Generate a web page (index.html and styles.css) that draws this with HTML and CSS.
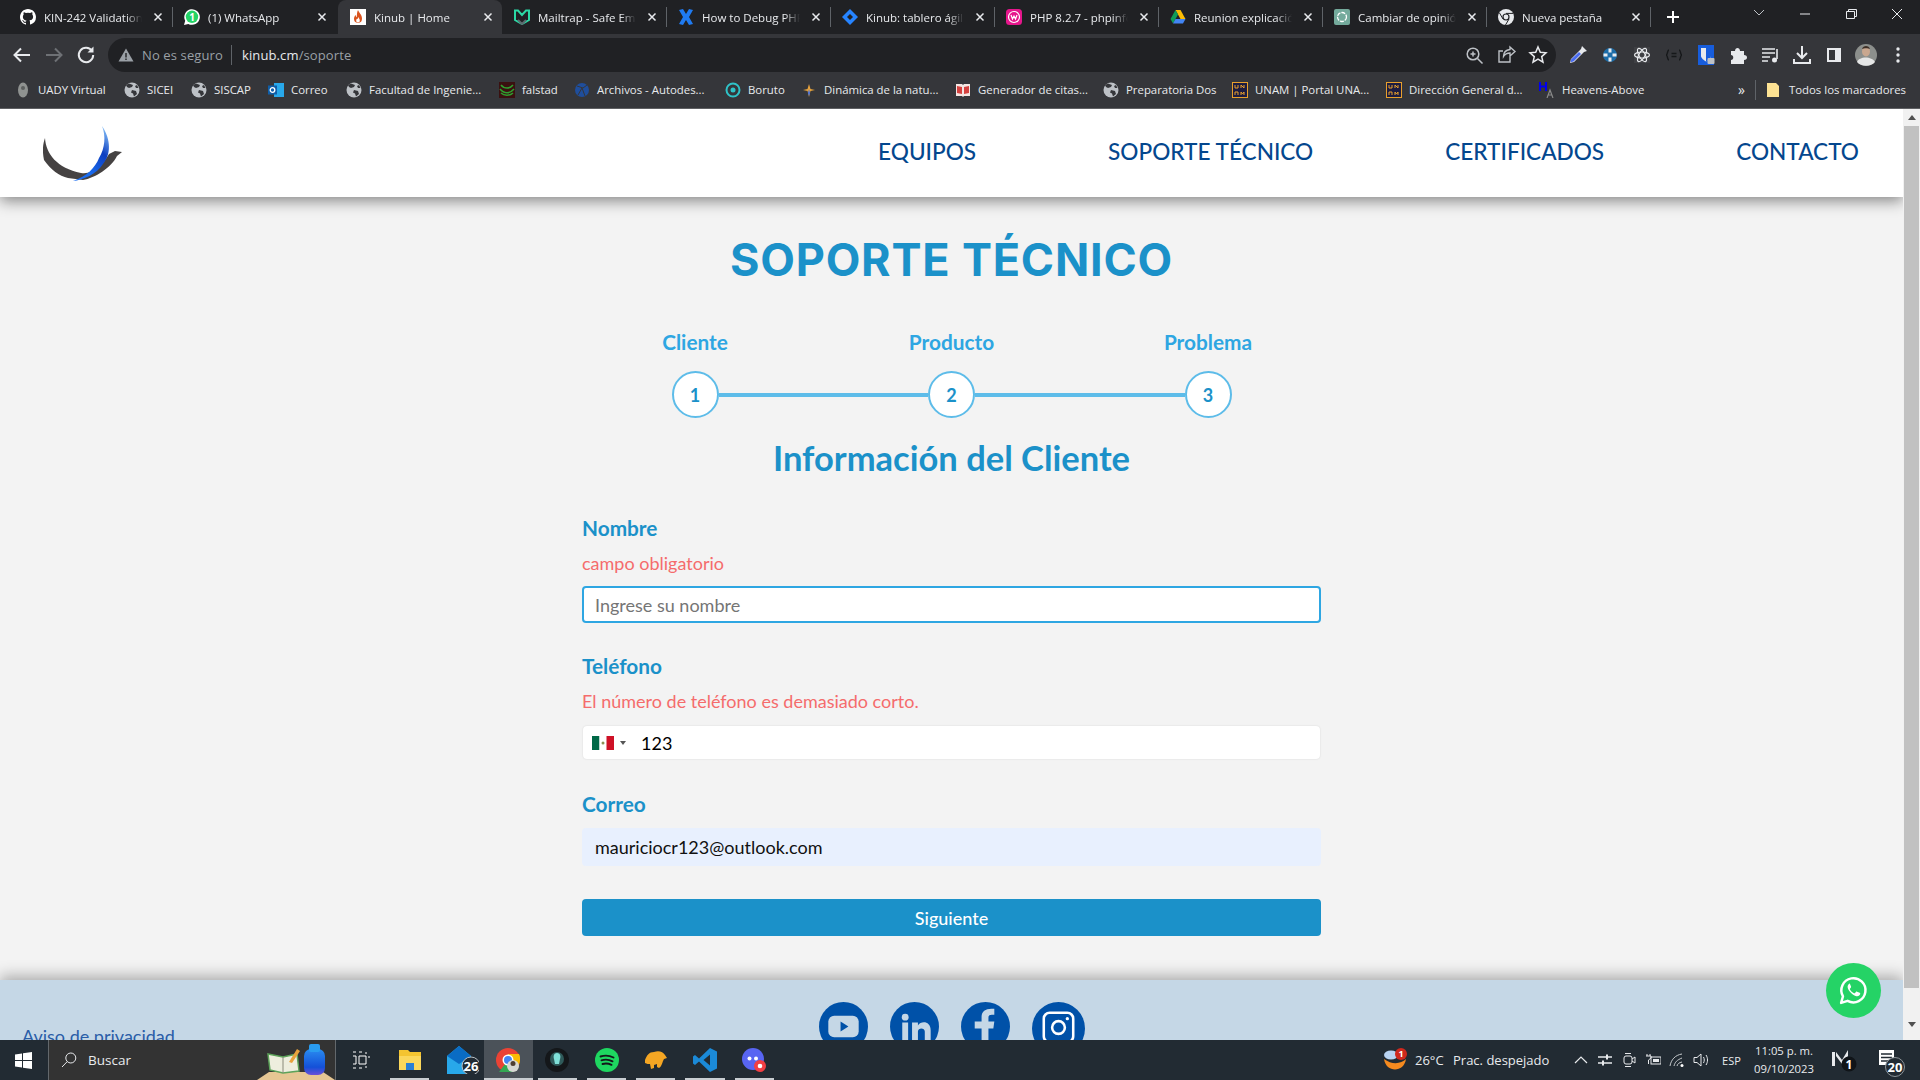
FILE: index.html
```html
<!DOCTYPE html>
<html lang="es">
<head>
<meta charset="utf-8">
<title>Kinub | Soporte</title>
<link rel="stylesheet" href="styles.css">
</head>
<body>
<svg class="defs" width="0" height="0">
  <defs>
    <symbol id="globe" viewBox="0 0 16 16"><circle cx="8" cy="8" r="7.5" fill="#bdc1c6"/><path d="M5 1.5 9 3 8 5 5 6 3 5 2 3zM8 8l4 1 1 3-3 2.5-1-3-2-1zM13 3l1.500 3-2.500 0-1-2z" fill="#35363a"/></symbol>
    <symbol id="close" viewBox="0 0 10 10"><path d="M1.500 1.500l7 7m0-7l-7 7" stroke="#e8eaed" stroke-width="1.500" fill="none"/></symbol>
    <symbol id="wa" viewBox="0 0 32 32"><path d="M4 28l1.800-6.400A11.700 11.700 0 1 1 10.300 26z" fill="none" stroke="currentColor" stroke-width="2.400" stroke-linejoin="round"/><path d="M12 9.500c-1 .4-2 2-1.600 3.800.6 3 4.800 7.400 8.400 8.200 1.900.4 3.400-.8 3.700-2 .2-.7-.1-1-.5-1.200l-2.500-1.200c-.5-.2-.8-.1-1 .2l-1 1.200c-.3.300-.6.300-1 .1-1.700-.8-3-2-3.900-3.600-.2-.4-.2-.6.100-.9l.8-1c.2-.3.200-.6.100-.9l-1-2.400c-.2-.5-.6-.6-1-.5z" fill="currentColor"/></symbol>
    <linearGradient id="blueArc" x1="0.800" y1="0" x2="0.200" y2="1"><stop offset="0" stop-color="#7db8f5"/><stop offset=".35" stop-color="#0e3fc0"/><stop offset=".8" stop-color="#1a6df0"/><stop offset="1" stop-color="#1a6df0"/></linearGradient>
    <linearGradient id="bottle" x1="0" y1="0" x2="0" y2="1"><stop offset="0" stop-color="#2a8cf0"/><stop offset=".7" stop-color="#1450d8"/><stop offset="1" stop-color="#6a50d8"/></linearGradient>
  </defs>
</svg>

<div class="tabstrip">
  <div class="tab">
    <svg class="fav" viewBox="0 0 16 16"><path fill="#fff" d="M8 0C3.600 0 0 3.600 0 8c0 3.500 2.300 6.500 5.500 7.600.4.100.5-.2.5-.4v-1.400c-2.200.5-2.700-1-2.700-1-.4-.9-.9-1.200-.9-1.200-.7-.5.100-.5.100-.5.800.1 1.200.8 1.200.8.700 1.200 1.900.9 2.300.7.100-.5.300-.9.500-1.100-1.800-.2-3.600-.9-3.600-4 0-.9.300-1.600.8-2.100-.1-.2-.4-1 .1-2.100 0 0 .7-.2 2.200.8a7.500 7.500 0 0 1 4 0c1.500-1 2.200-.8 2.200-.8.400 1.100.2 1.900.1 2.100.5.600.8 1.300.8 2.100 0 3.100-1.900 3.700-3.700 3.900.3.300.6.800.6 1.500v2.200c0 .2.100.5.600.4A8 8 0 0 0 16 8c0-4.400-3.600-8-8-8z"/></svg>
    <span class="tab-title">KIN-242 Validation</span>
    <svg class="tab-x"><use href="#close"/></svg>
  </div>
  <div class="tab tab-wide">
    <svg class="fav" viewBox="0 0 16 16"><path d="M0 16l1.200-4.200A7.800 7.800 0 1 1 4.300 14.900z" fill="#fff"/><circle cx="8" cy="7.800" r="6.200" fill="#25d366"/><text x="8" y="11.500" class="fav-num">1</text></svg>
    <span class="tab-title">(1) WhatsApp</span>
    <svg class="tab-x"><use href="#close"/></svg>
  </div>
  <div class="tab tab-active">
    <svg class="fav" viewBox="0 0 16 16"><rect width="16" height="16" fill="#fff"/><path d="M8 1c1 3 4 4.500 4 8.500A4.300 4.300 0 0 1 8 14a4.300 4.300 0 0 1-4-4.500c0-1.500 1-3 1.700-3.500 0 1.200.5 2 1 2.200C7 6 6.800 3.500 8 1z" fill="#d9531e"/><path d="M8.200 8c.8 1.500 1.600 2 1.600 3.500A1.800 1.800 0 0 1 8 13.500a1.800 1.800 0 0 1-1.800-2c0-1 .6-1.500 1-2 .2.500.5.500.7.400 0-.6 0-1.200.3-1.900z" fill="#fff"/></svg>
    <span class="tab-title">Kinub | Home</span>
    <svg class="tab-x"><use href="#close"/></svg>
  </div>
  <div class="tab">
    <svg class="fav" viewBox="0 0 16 16"><path d="M1 1.500h3L8 6l4-4.500h3V11l-7 4-7-4z" fill="none" stroke="#2bd9a5" stroke-width="2"/><path d="M4 11l4 4 4-4" fill="none" stroke="#5c6b70" stroke-width="2"/></svg>
    <span class="tab-title">Mailtrap - Safe Email</span>
    <svg class="tab-x"><use href="#close"/></svg>
  </div>
  <div class="tab">
    <svg class="fav" viewBox="0 0 16 16"><path d="M1 1l4-1 3 5 3-5 4 1-4 7 4 7-4 1-3-5-3 5-4-1 4-7z" fill="#1f7bf2"/></svg>
    <span class="tab-title">How to Debug PHP</span>
    <svg class="tab-x"><use href="#close"/></svg>
  </div>
  <div class="tab">
    <svg class="fav" viewBox="0 0 16 16"><path d="M8 0l8 8-8 8-8-8z" fill="#2684ff"/><path d="M8 5l3 3-3 3-3-3z" fill="#202124"/></svg>
    <span class="tab-title">Kinub: tablero ágil</span>
    <svg class="tab-x"><use href="#close"/></svg>
  </div>
  <div class="tab">
    <svg class="fav" viewBox="0 0 16 16"><rect width="16" height="16" rx="3.500" fill="#e6168c"/><circle cx="8" cy="8" r="5.500" fill="none" stroke="#fff" stroke-width="1.200"/><path d="M5 6l1.500 4L8 7l1.500 3L11 6" fill="none" stroke="#fff" stroke-width="1.200"/></svg>
    <span class="tab-title">PHP 8.2.7 - phpinfo()</span>
    <svg class="tab-x"><use href="#close"/></svg>
  </div>
  <div class="tab">
    <svg class="fav" viewBox="0 0 16 16"><path d="M5.500 1h5l5 9h-5z" fill="#fbbc04"/><path d="M5.500 1L.5 10 3 14.500 8 5.500z" fill="#0f9d58"/><path d="M3 14.500h10l2.500-4.500H5.500z" fill="#4285f4"/></svg>
    <span class="tab-title">Reunion explicación</span>
    <svg class="tab-x"><use href="#close"/></svg>
  </div>
  <div class="tab">
    <svg class="fav" viewBox="0 0 16 16"><rect width="16" height="16" rx="2" fill="#74aa9c"/><circle cx="8" cy="8" r="4.500" fill="none" stroke="#fff" stroke-width="1.300" stroke-dasharray="4 1"/></svg>
    <span class="tab-title">Cambiar de opinión</span>
    <svg class="tab-x"><use href="#close"/></svg>
  </div>
  <div class="tab tab-last">
    <svg class="fav" viewBox="0 0 16 16"><circle cx="8" cy="8" r="8" fill="#e8eaed"/><circle cx="8" cy="8" r="3.600" fill="#202124"/><circle cx="8" cy="8" r="2.400" fill="#e8eaed"/><path d="M8 4.400h7M5 10L1.500 4M11 10l-3.500 6" stroke="#202124" stroke-width="1"/></svg>
    <span class="tab-title">Nueva pestaña</span>
    <svg class="tab-x"><use href="#close"/></svg>
  </div>
  <svg class="newtab" viewBox="0 0 12 12"><path d="M6 0v12M0 6h12" stroke="#fff" stroke-width="2"/></svg>
  <div class="winctrls">
    <svg class="winbtn" viewBox="0 0 46 28"><path d="M18 10l5 5 5-5" fill="none" stroke="#bdc1c6"/></svg>
    <svg class="winbtn" viewBox="0 0 46 28"><path d="M18 14h10" stroke="#e8eaed"/></svg>
    <svg class="winbtn" viewBox="0 0 46 28"><path d="M18.500 11.500h8v7h-8zM20.500 11.500v-2h8v7h-2" fill="none" stroke="#e8eaed"/></svg>
    <svg class="winbtn" viewBox="0 0 46 28"><path d="M18 9l10 10m0-10L18 19" stroke="#e8eaed"/></svg>
  </div>
</div>

<div class="toolbar">
  <svg class="tool" viewBox="0 0 32 32"><path d="M24 16H9m6-6.500L8.500 16l6.500 6.500" fill="none" stroke="#e8eaed" stroke-width="2"/></svg>
  <svg class="tool" viewBox="0 0 32 32"><path d="M8 16h15m-6-6.500l6.500 6.500-6.500 6.500" fill="none" stroke="#6e7175" stroke-width="2"/></svg>
  <svg class="tool" viewBox="0 0 32 32"><path d="M22 12a7.200 7.200 0 1 0 1.200 4" fill="none" stroke="#e8eaed" stroke-width="2"/><path d="M23.500 7.500v6h-6z" fill="#e8eaed"/></svg>
  <div class="omnibox">
    <svg class="warn" viewBox="0 0 16 16"><path d="M8 1.500L15.500 14.500H.5z" fill="#9aa0a6"/><path d="M7.300 6h1.400v4.500H7.300zM7.300 11.500h1.400V13H7.300z" fill="#202124"/></svg>
    <span class="notsafe">No es seguro</span>
    <span class="omni-sep"></span>
    <span class="url">kinub.cm<span class="url-path">/soporte</span></span>
    <svg class="tool omni-first" viewBox="0 0 32 32"><circle cx="15" cy="15" r="5.800" fill="none" stroke="#bdc1c6" stroke-width="1.500"/><path d="M19.500 19.500l5 5M12.500 15h5M15 12.500v5" stroke="#bdc1c6" stroke-width="1.500"/></svg>
    <svg class="tool" viewBox="0 0 32 32"><path d="M20 15v8H9V12h4M20 8l5 4.500-5 4.500v-3c-3 0-5 1-6.500 3.500 0-4 2.500-6.500 6.500-7z" fill="none" stroke="#bdc1c6" stroke-width="1.400"/></svg>
    <svg class="tool" viewBox="0 0 32 32"><path d="M16 8l2.300 5.300 5.700.5-4.300 3.800 1.300 5.600-5-3-5 3 1.300-5.600L8 13.800l5.700-.5z" fill="none" stroke="#e8eaed" stroke-width="1.500"/></svg>
  </div>
  <div class="exts">
    <svg class="tool" viewBox="0 0 32 32"><path d="M20 7l5 5-3 1-10 10-4 1 1-4 10-10z" fill="#e8eaed"/><path d="M17 13l2 2-7.500 7.500-3 .8.800-3z" fill="#4a6cf0"/></svg>
    <svg class="tool" viewBox="0 0 32 32"><circle cx="16" cy="16" r="7" fill="#1b6ca8"/><path d="M14.500 9.500h3v4h-3zM14.500 18.500h3v4h-3zM9.500 14.500h4v3h-4zM18.500 14.500h4v3h-4z" fill="#e8eaed"/></svg>
    <svg class="tool" viewBox="0 0 32 32"><rect x="8" y="8" width="16" height="16" fill="#3f4044"/><g fill="none" stroke="#e8eaed" stroke-width="1.200"><ellipse cx="16" cy="16" rx="7.500" ry="3"/><ellipse cx="16" cy="16" rx="7.500" ry="3" transform="rotate(60 16 16)"/><ellipse cx="16" cy="16" rx="7.500" ry="3" transform="rotate(120 16 16)"/></g></svg>
    <svg class="tool" viewBox="0 0 32 32"><path d="M11 11c-2 0-1 5-3 5 2 0 1 5 3 5M21 11c2 0 1 5 3 5-2 0-1 5-3 5M13.500 14.500h5M13.500 17.500h5" fill="none" stroke="#16181a" stroke-width="1.400"/></svg>
    <svg class="tool" viewBox="0 0 32 32"><rect x="8" y="6" width="16" height="20" fill="#175ddc"/><path d="M11 9h10v8c0 2-3 4.500-5 5.500-2-1-5-3.500-5-5.500z" fill="#e8eaed"/><path d="M16 9h5v8c0 2-3 4.500-5 5.500z" fill="#175ddc"/><rect x="17.500" y="19" width="7" height="6" rx="1" fill="#bdc1c6"/></svg>
    <svg class="tool" viewBox="0 0 32 32"><path d="M9 12h4c0-4 5-4 5 0h4v4c4 0 4 5 0 5v4H9v-4c3 0 3-5 0-5z" fill="#e8eaed"/></svg>
    <svg class="tool" viewBox="0 0 32 32"><path d="M8 10h13M8 14h13M8 18h8M8 22h6" stroke="#e8eaed" stroke-width="1.600"/><path d="M23 10v10" stroke="#e8eaed" stroke-width="1.600"/><circle cx="20.500" cy="21" r="2.500" fill="#e8eaed"/></svg>
    <svg class="tool" viewBox="0 0 32 32"><path d="M16 7v12m-5-5l5 5 5-5M8 20v4h16v-4" fill="none" stroke="#e8eaed" stroke-width="2"/></svg>
    <svg class="tool" viewBox="0 0 32 32"><rect x="9" y="9" width="14" height="14" fill="#e8eaed"/><rect x="11" y="11" width="6" height="10" fill="#35363a"/></svg>
    <svg class="tool" viewBox="0 0 32 32"><circle cx="16" cy="16" r="11" fill="#8c8f8c"/><ellipse cx="16" cy="12.500" rx="4" ry="5" fill="#c9a78f"/><path d="M12 10c1-4 7-4 8 0-2-1-6-1-8 0z" fill="#3d2f26"/><path d="M7 23c2-6 15-6 18 0-4 5-14 5-18 0z" fill="#e5e6e6"/></svg>
    <svg class="tool" viewBox="0 0 32 32"><circle cx="16" cy="10" r="1.700" fill="#e8eaed"/><circle cx="16" cy="16" r="1.700" fill="#e8eaed"/><circle cx="16" cy="22" r="1.700" fill="#e8eaed"/></svg>
  </div>
</div>

<div class="bookmarks">
  <div class="bm-list">
    <span class="bm"><svg class="fav" viewBox="0 0 16 16"><ellipse cx="8" cy="8" rx="5" ry="7.500" fill="#8f9290"/><circle cx="8" cy="6" r="2" fill="#5c5f5e"/></svg>UADY Virtual</span>
    <span class="bm"><svg class="fav"><use href="#globe"/></svg>SICEI</span>
    <span class="bm"><svg class="fav"><use href="#globe"/></svg>SISCAP</span>
    <span class="bm"><svg class="fav" viewBox="0 0 16 16"><rect x="6" y="1" width="10" height="14" fill="#28a8ea"/><rect y="3.500" width="9" height="9" fill="#0f5ea8"/><circle cx="4.500" cy="8" r="2.300" fill="none" stroke="#fff" stroke-width="1.300"/></svg>Correo</span>
    <span class="bm"><svg class="fav"><use href="#globe"/></svg>Facultad de Ingenie...</span>
    <span class="bm"><svg class="fav" viewBox="0 0 16 16"><rect width="16" height="16" fill="#3a1010"/><path d="M2 3c3 4 9 4 12 0M1 7c4 5 10 5 14 0M2 11c3 3 9 3 12 0" fill="none" stroke="#2f9e2f" stroke-width="1.500"/></svg>falstad</span>
    <span class="bm"><svg class="fav" viewBox="0 0 16 16"><circle cx="8" cy="8" r="7" fill="#1f4e9c"/><path d="M3 4l6 2 4-3M4 13l4-7 3 8" fill="none" stroke="#35363a"/></svg>Archivos - Autodes...</span>
    <span class="bm"><svg class="fav" viewBox="0 0 16 16"><circle cx="8" cy="8" r="6.500" fill="none" stroke="#2fc3c8" stroke-width="2"/><circle cx="8" cy="8" r="2.500" fill="#2fc3c8"/></svg>Boruto</span>
    <span class="bm"><svg class="fav" viewBox="0 0 16 16"><path d="M8 2l1.500 5L14 8l-4.500 1L8 15 6.500 9 2 8l4.500-1z" fill="#e8a33c"/><path d="M8 7l1 4-1 3-1-3z" fill="#3c6fe8"/></svg>Dinámica de la natu...</span>
    <span class="bm"><svg class="fav" viewBox="0 0 16 16"><path d="M1 2h6l1 1 1-1h6v12H9l-1 1-1-1H1z" fill="#f4e6e3"/><path d="M2 4l5 1v7l-5-1zM14 4l-5 1v7l5-1z" fill="#d4413f"/></svg>Generador de citas...</span>
    <span class="bm"><svg class="fav"><use href="#globe"/></svg>Preparatoria Dos</span>
    <span class="bm"><svg class="fav" viewBox="0 0 16 16"><rect x=".5" y=".5" width="15" height="15" fill="#1c1c40" stroke="#e8a02c"/><path d="M3 3v3h3V3M9 6V3l3 3V3M3 13v-3h3v3M9 13v-3l1.500 2 1.500-2v3" fill="none" stroke="#e8a02c"/></svg>UNAM | Portal UNA...</span>
    <span class="bm"><svg class="fav" viewBox="0 0 16 16"><rect x=".5" y=".5" width="15" height="15" fill="#1c1c40" stroke="#e8a02c"/><path d="M3 3v3h3V3M9 6V3l3 3V3M3 13v-3h3v3M9 13v-3l1.500 2 1.500-2v3" fill="none" stroke="#e8a02c"/></svg>Dirección General d...</span>
    <span class="bm"><svg class="fav" viewBox="0 0 16 16"><path d="M1 0v9M7 0v9M1 4.500h6" stroke="#0000f0" stroke-width="2" fill="none"/><path d="M8 16l3-8 3 8M9.500 13h3" stroke="#8a8a8a" stroke-width="1.200" fill="none"/></svg>Heavens-Above</span>
  </div>
  <div class="bm-right">
    <span class="bm-more">»</span>
    <span class="bm-sep"></span>
    <svg class="folder" viewBox="0 0 12 14"><path d="M0 0h9l3 3v11H0z" fill="#fde293"/></svg>
    <span>Todos los marcadores</span>
  </div>
</div>

<div class="viewport">
  <div class="page">
    <header class="site-head">
      <svg class="logo" viewBox="0 0 80 58">
        <path d="M2 12C3 28 14 42 38 47 50 49 60 38 66 28l6-3 7 1-5 4C68 42 52 52 40 54l-15-2C16 50 8 44 1 34-1 24 0 18 2 12z" fill="#454242"/>
        <path d="M59 0c7 10 11 26 1 38C54 48 40 54 30 55c14-5 22-13 26-23C62 22 63 10 59 0z" fill="url(#blueArc)"/>
      </svg>
      <nav class="site-nav">
        <a>EQUIPOS</a>
        <a>SOPORTE TÉCNICO</a>
        <a>CERTIFICADOS</a>
        <a>CONTACTO</a>
      </nav>
    </header>
    <main class="content">
      <h1 class="page-title">SOPORTE TÉCNICO</h1>
      <div class="step-labels">
        <span>Cliente</span><span>Producto</span><span>Problema</span>
      </div>
      <div class="steps">
        <span class="step-dot">1</span><span class="step-line"></span>
        <span class="step-dot">2</span><span class="step-line"></span>
        <span class="step-dot">3</span>
      </div>
      <h2 class="form-title">Información del Cliente</h2>
      <form class="form">
        <div class="field">
          <label class="field-label">Nombre</label>
          <p class="field-error">campo obligatorio</p>
          <div class="input input-focus"><span class="placeholder">Ingrese su nombre</span></div>
        </div>
        <div class="field field-tel">
          <label class="field-label">Teléfono</label>
          <p class="field-error">El número de teléfono es demasiado corto.</p>
          <div class="input input-tel">
            <svg class="flag" viewBox="0 0 22 14"><rect width="7.500" height="14" fill="#006847"/><rect x="7.500" width="7" height="14" fill="#fff"/><rect x="14.500" width="7.500" height="14" fill="#ce1126"/><circle cx="11" cy="7" r="1.500" fill="#8c9157"/></svg>
            <span class="caret"></span>
            <span class="tel-value">123</span>
          </div>
        </div>
        <div class="field field-last">
          <label class="field-label">Correo</label>
          <div class="input input-auto">mauriciocr123@outlook.com</div>
        </div>
        <button class="submit" type="button">Siguiente</button>
      </form>
    </main>
    <footer class="site-foot">
      <a class="privacy">Aviso de privacidad</a>
      <div class="socials">
        <svg class="social soc-yt" viewBox="0 0 50 50"><circle cx="25" cy="25" r="25" fill="#0051a8"/><rect x="9.500" y="14" width="31" height="22" rx="6" fill="#c5d7e6"/><path d="M22 20l8 5-8 5z" fill="#0051a8"/></svg>
        <svg class="social soc-in" viewBox="0 0 50 50"><circle cx="25" cy="25" r="25" fill="#0051a8"/><circle cx="15.500" cy="15.500" r="3.500" fill="#c5d7e6"/><path d="M12.500 21h6v21h-6zM22.500 21h6v3c3-5 13-5 13 5v13h-6V30c0-4-7-4-7 0v12h-6z" fill="#c5d7e6"/></svg>
        <svg class="social soc-fb" viewBox="0 0 50 50"><circle cx="25" cy="25" r="25" fill="#0051a8"/><path d="M21 50V27h-7v-7h7v-5c0-6 5-9 13-8v6c-4 0-6 0-6 3v4h6l-1 7h-5v23z" fill="#c5d7e6"/></svg>
        <svg class="social soc-ig" viewBox="0 0 54 54"><circle cx="27" cy="27" r="27" fill="#0051a8"/><rect x="12" y="11" width="30" height="30" rx="6" fill="none" stroke="#fff" stroke-width="2.600"/><circle cx="27" cy="26" r="6.500" fill="none" stroke="#fff" stroke-width="2.600"/><circle cx="36" cy="17" r="1.700" fill="#fff"/></svg>
      </div>
    </footer>
  </div>
  <div class="scrollbar">
    <span class="sb-arrow sb-up"></span>
    <span class="sb-thumb"></span>
    <span class="sb-arrow sb-down"></span>
  </div>
  <a class="wa-float"><svg class="wa-icon"><use href="#wa"/></svg></a>
</div>

<div class="taskbar">
  <div class="start"><svg class="win" viewBox="0 0 17 17"><path d="M0 2.400l7-1v6.600H0zM8 1.300L17 0v8H8zM0 9h7v6.600l-7-1zM8 9h9v8l-9-1.300z" fill="#fff"/></svg></div>
  <div class="search">
    <svg class="search-ic" viewBox="0 0 16 16"><circle cx="9.800" cy="6" r="5" fill="none" stroke="#e8eaed"/><path d="M6.300 9.500L1 15" stroke="#e8eaed"/></svg>
    <span>Buscar</span>
    <svg class="search-art" viewBox="0 0 78 36"><path d="M0 36l12-8h54l12 8z" fill="#e6c693"/><path d="M11 10l15 3 14-3 2 17-16 2-13-3z" fill="#eeeede" stroke="#5da35a" stroke-width="1.500"/><path d="M26 13v16" stroke="#8a8a7a"/><path d="M32 18l8-13 3 2-8 12z" fill="#e8a23c"/><rect x="47" y="5" width="21" height="26" rx="7" fill="url(#bottle)"/><rect x="52" y="0" width="11" height="8" rx="2" fill="#2a9cf0"/></svg>
  </div>
  <div class="app"><svg class="app-ic ic-small" viewBox="0 0 18 18"><path d="M1 1h3M1 5h3v8H1M1 17h3M7 1h3M7 17h3M7 5h7v8H7zM14 1v2M14 15v2M17 5v2" fill="none" stroke="#fff"/></svg></div>
  <div class="app app-on"><svg class="app-ic" viewBox="0 0 24 24"><path d="M1 2h9l2 2h11v18H1z" fill="#f4c430"/><rect x="1" y="8" width="22" height="14" fill="#fbd75b"/><rect x="8" y="15" width="8" height="7" fill="#2b7fd4"/></svg></div>
  <div class="app"><svg class="app-ic ic-mail" viewBox="0 0 32 28"><path d="M0 10L12 0l12 10v18H0z" fill="#28a8ea"/><path d="M0 10l12 8 12-8-12-10z" fill="#0a6cc4"/><circle cx="24" cy="20" r="9" fill="#222b33" stroke="#b9bfc4"/><text x="24" y="25" class="badge-num">26</text></svg></div>
  <div class="app app-on app-active"><svg class="app-ic" viewBox="0 0 24 24"><circle cx="12" cy="12" r="12" fill="#ea4335"/><path d="M12 12L3 24h14l7-12z" fill="#34a853"/><path d="M12 6h11a12 12 0 0 1-6 16z" fill="#fbbc04"/><circle cx="12" cy="12" r="5.500" fill="#fff"/><circle cx="12" cy="12" r="4" fill="#4285f4"/><circle cx="17" cy="18" r="6" fill="#d8d8d4"/><circle cx="17" cy="15.500" r="2.500" fill="#4f3e33"/></svg></div>
  <div class="app app-on"><svg class="app-ic" viewBox="0 0 24 24"><circle cx="12" cy="12" r="12" fill="#14171a"/><circle cx="12" cy="11" r="7" fill="#2f5a5a"/><path d="M12 5c3 0 4 3 3 6l-1 5h-4l-1-5c-1-3 0-6 3-6z" fill="#7fe0d8"/></svg></div>
  <div class="app app-on"><svg class="app-ic" viewBox="0 0 24 24"><circle cx="12" cy="12" r="12" fill="#1ed760"/><path d="M5.500 8.500c4-1.200 9-1 13 1M6.500 12.300c3.500-1 7.500-.8 11 1M7.500 16c3-.8 6-.6 9 .8" fill="none" stroke="#14171a" stroke-width="1.900" stroke-linecap="round"/></svg></div>
  <div class="app app-on"><svg class="app-ic" viewBox="0 0 24 24"><path d="M1 12c2-5 4-8 9-8 5-2 9 0 11 3l2 3-3 1-1 2c-1 3-2 6-4 7l-2-1v-3l-3 1v3l-3 1-1-5c-2 0-3 0-5-1z" fill="#f5a623"/></svg></div>
  <div class="app app-on"><svg class="app-ic" viewBox="0 0 24 24"><path d="M17 0l7 3.500v17L17 24 6 13.500 2 17 0 15.500V8.500L2 7l4 3.500z" fill="#1b8ad8"/><path d="M17 6.500L10.500 12l6.500 5.500z" fill="#222b33"/></svg></div>
  <div class="app app-on"><svg class="app-ic" viewBox="0 0 24 24"><circle cx="11" cy="11" r="11" fill="#5865f2"/><circle cx="7.500" cy="10.500" r="2" fill="#fff"/><circle cx="14" cy="10.500" r="2" fill="#fff"/><circle cx="18" cy="18" r="6" fill="#f23f43"/><circle cx="18" cy="18" r="2.300" fill="#fff"/></svg></div>
  <div class="tray">
    <svg class="tray-weather" viewBox="0 0 24 26"><path d="M1 12c2 14 20 14 22 0-5 5-14 6-22 0z" fill="#f58a1f"/><ellipse cx="8" cy="8" rx="7" ry="4.500" fill="#b9d3f2"/><circle cx="18" cy="7" r="6" fill="#d0281d"/><text x="18" y="10" class="weather-num">1</text></svg>
    <span class="tray-text">26°C</span>
    <span class="tray-text">Prac. despejado</span>
    <svg class="tray-ic" viewBox="0 0 16 16"><path d="M2 11l6-6 6 6" fill="none" stroke="#e8eaed" stroke-width="1.200"/></svg>
    <svg class="tray-ic" viewBox="0 0 16 16"><path d="M1 5h14M1 11h14" stroke="#e8eaed" stroke-width="1.500"/><path d="M9 2.500h2v5H9zM5 8.500h2v5H5z" fill="#e8eaed"/></svg>
    <svg class="tray-ic" viewBox="0 0 16 16"><rect x="3" y="4" width="8" height="8" rx="2" fill="none" stroke="#e8eaed"/><path d="M11 7l3-2v6l-3-2M4 1.500h6M4 14.500h6" fill="none" stroke="#e8eaed"/></svg>
    <svg class="tray-ic" viewBox="0 0 16 16"><rect x="6" y="5" width="10" height="7" fill="none" stroke="#e8eaed"/><rect x="8" y="7" width="6" height="3" fill="#e8eaed"/><path d="M2 2v2M5 2v2M1 4h5v2L3.500 8v4" fill="none" stroke="#e8eaed"/></svg>
    <svg class="tray-ic" viewBox="0 0 16 16"><path d="M1 14C2 8 6 3 13 2M5 14c1-4 3-6 8-8M8 14c.5-2 2-3.500 5-4" fill="none" stroke="#c7cbce"/><circle cx="13" cy="13.500" r="1.500" fill="#fff"/></svg>
    <svg class="tray-ic" viewBox="0 0 16 16"><path d="M1 5.500h3L8 2v12L4 10.500H1z" fill="none" stroke="#e8eaed"/><path d="M10.500 5c1 2 1 4 0 6M13 3c2 3 2 7 0 10" fill="none" stroke="#e8eaed"/></svg>
    <span class="tray-lang">ESP</span>
    <span class="clock"><span>11:05 p. m.</span><span>09/10/2023</span></span>
    <svg class="tray-m" viewBox="0 0 28 24"><path d="M1 4h3v14H1zM5 4l6 8 6-10v6l-6 8-6-8z" fill="#e8eaed"/><circle cx="18" cy="16" r="7.500" fill="#101418"/><text x="18" y="20.500" class="m-num">1</text></svg>
    <svg class="tray-notif" viewBox="0 0 40 30"><path d="M7 3h15v15H7z" fill="#fff"/><path d="M9 7h11M9 10.500h11M9 14h7" stroke="#222b33" stroke-width="1.300"/><circle cx="23" cy="20" r="9.500" fill="#222b33" stroke="#8d9499"/><text x="23" y="25" class="badge-num">20</text></svg>
  </div>
</div>
</body>
</html>
```

FILE: styles.css
```css
* { box-sizing: border-box; }
html, body { margin: 0; height: 100%; }
body {
  width: 1920px;
  height: 1080px;
  overflow: hidden;
  display: flex;
  flex-direction: column;
  font-family: "Open Sans", "Noto Sans", sans-serif;
  background: #202124;
}
.defs { display: block; height: 0; width: 0; }

/* ---------- browser tabs ---------- */
.tabstrip {
  height: 34px;
  flex: none;
  display: flex;
  padding-left: 8px;
  background: #202124;
  color: #e8eaed;
  font-size: 11.500px;
}
.tab {
  position: relative;
  width: 164px;
  flex: none;
  display: flex;
  align-items: center;
  padding-left: 12px;
}
.tab-wide { width: 166px; }
.tab::after {
  content: "";
  position: absolute;
  right: -1px;
  top: 7px;
  height: 20px;
  width: 1px;
  background: #5f6368;
}
.tab-wide::after, .tab-active::after { display: none; }
.tab-active { background: #35363a; border-radius: 8px 8px 0 0; }
.fav { width: 16px; height: 16px; flex: none; display: block; }
.fav-num { font: 700 10px "Open Sans", sans-serif; fill: #fff; text-anchor: middle; }
.tab-title {
  width: 98px;
  margin-left: 8px;
  white-space: nowrap;
  overflow: hidden;
  -webkit-mask-image: linear-gradient(90deg, #000 84%, transparent);
  mask-image: linear-gradient(90deg, #000 84%, transparent);
}
.tab-x { width: 10px; height: 10px; margin-left: 11px; flex: none; }
.newtab { width: 12px; height: 12px; margin: 11px 0 0 17px; flex: none; }
.winctrls { display: flex; margin-left: auto; }
.winbtn { width: 46px; height: 28px; flex: none; }

/* ---------- toolbar ---------- */
.toolbar {
  height: 38px;
  flex: none;
  display: flex;
  align-items: flex-start;
  padding: 4px 6px 0;
  background: #35363a;
}
.tool { width: 32px; height: 34px; flex: none; display: block; }
.omnibox {
  width: 1448px;
  height: 34px;
  margin: 0 6px;
  padding: 0 2px 0 10px;
  display: flex;
  align-items: center;
  flex: none;
  background: #202124;
  border-radius: 17px;
  font-size: 13px;
  letter-spacing: .12px;
  white-space: nowrap;
}
.warn { width: 16px; height: 16px; flex: none; }
.notsafe { margin-left: 8px; color: #9aa0a6; }
.omni-sep { width: 1px; height: 20px; margin: 0 10px 0 8px; background: #5f6368; }
.url { color: #e8eaed; }
.url-path { color: #9aa0a6; }
.omni-first { margin-left: auto; }
.exts { display: flex; }

/* ---------- bookmarks ---------- */
.bookmarks {
  height: 37px;
  flex: none;
  display: flex;
  justify-content: space-between;
  align-items: center;
  padding: 0 14px 1px 15px;
  background: #35363a;
  border-bottom: 1px solid #5f6063;
  color: #e8eaed;
  font-size: 11.400px;
  white-space: nowrap;
}
.bm-list {
  display: grid;
  grid-template-columns: 109px 67px 77px 78px 153px 75px 151px 76px 154px 148px 129px 154px 153px auto;
}
.bm { display: flex; align-items: center; gap: 7px; }
.bm-right { display: flex; align-items: center; }
.bm-more { font-size: 14px; width: 12px; }
.bm-sep { width: 1px; height: 20px; background: #5f6368; margin: 0 11px 0 5px; }
.folder { width: 12px; height: 14px; margin-right: 10px; }

/* ---------- page viewport ---------- */
.viewport {
  position: relative;
  flex: none;
  height: 931px;
  display: flex;
  overflow: hidden;
  background: #f3f3f3;
}
.page {
  width: 1903px;
  flex: none;
  display: flex;
  flex-direction: column;
  overflow: hidden;
  font-family: "Lato", "Open Sans", sans-serif;
}
.site-head {
  position: relative;
  z-index: 2;
  height: 88px;
  flex: none;
  display: flex;
  justify-content: space-between;
  align-items: flex-start;
  padding: 17px 44px 0 43px;
  background: #fff;
  box-shadow: 0 4px 14px rgba(0, 0, 0, .45);
}
.logo { width: 80px; height: 58px; flex: none; }
.site-nav {
  display: flex;
  gap: 132px;
  padding-top: 10px;
  color: #04478e;
  font-size: 22.600px;
  font-weight: 500;
  line-height: 32px;
  white-space: nowrap;
}

/* ---------- content ---------- */
.content {
  height: 783px;
  flex: none;
  display: flex;
  flex-direction: column;
  align-items: center;
  background: #f3f3f3;
}
.page-title {
  margin: 34px 0 0;
  height: 58px;
  font-family: "Inter", "Open Sans", sans-serif;
  font-size: 45px;
  font-weight: 700;
  line-height: 58px;
  letter-spacing: .8px;
  color: #1b91c9;
  white-space: nowrap;
}
.step-labels {
  margin-top: 40px;
  display: grid;
  grid-template-columns: repeat(3, 256.500px);
  justify-content: center;
  text-align: center;
  color: #2ea6e2;
  font-size: 20.800px;
  font-weight: 700;
  line-height: 26px;
}
.steps {
  margin-top: 16px;
  display: flex;
  align-items: center;
}
.step-dot {
  width: 47px;
  height: 47px;
  flex: none;
  display: flex;
  justify-content: center;
  align-items: center;
  background: #fff;
  border: 2px solid #5dbce9;
  border-radius: 50%;
  color: #1b91c9;
  font-size: 18px;
  font-weight: 700;
}
.step-line { width: 209.500px; height: 4px; background: #5dbce9; }
.form-title {
  margin: 19px 0 0;
  color: #1b91c9;
  font-size: 34.500px;
  font-weight: 700;
  line-height: 42px;
  white-space: nowrap;
}
.form { width: 739px; margin-top: 36px; display: flex; flex-direction: column; }
.field { margin-bottom: 30px; }
.field-tel { margin-bottom: 32px; }
.field-last { margin-bottom: 33px; }
.field-label {
  display: block;
  color: #1b91c9;
  font-size: 20.800px;
  font-weight: 700;
  line-height: 26px;
}
.field-error {
  margin: 9px 0 0;
  color: #f56c6c;
  font-size: 18px;
  line-height: 26px;
}
.input {
  margin-top: 10px;
  height: 37px;
  display: flex;
  align-items: center;
  padding: 0 13px;
  border-radius: 4px;
  font-size: 18px;
  color: #111;
}
.input-focus { background: #fff; border: 2px solid #2ea6e2; padding: 0 11px; }
.placeholder { color: #757575; }
.input-tel {
  margin: 12px 1px 0;
  height: 33px;
  padding: 0 9px;
  background: #fff;
  box-shadow: 0 0 2px rgba(0, 0, 0, .12);
}
.flag { width: 22px; height: 14px; flex: none; }
.caret {
  width: 0;
  height: 0;
  margin-left: 6px;
  border: 3px solid transparent;
  border-top: 4px solid #555;
  border-bottom: 0;
}
.tel-value { margin-left: 15px; color: #000; }
.input-auto { margin-top: 11px; height: 38px; background: #e8f0fe; }
.submit {
  height: 37px;
  padding: 0;
  border: 0;
  border-radius: 4px;
  background: #1b91c9;
  color: #fff;
  font-family: inherit;
  font-size: 18px;
  font-weight: 500;
}

/* ---------- footer ---------- */
.site-foot {
  position: relative;
  flex: none;
  height: 120px;
  display: grid;
  grid-template-columns: 1fr auto 1fr;
  background: #c5d7e6;
  box-shadow: 0 -4px 14px rgba(0, 0, 0, .3);
}
.privacy {
  padding: 44px 0 0 22px;
  color: #2a5da8;
  font-size: 18px;
  line-height: 24px;
}
.socials { display: flex; align-items: flex-start; padding-top: 22px; gap: 22px; }
.social { width: 49px; height: 49px; flex: none; }
.soc-ig { width: 53px; height: 53px; }

/* ---------- scrollbar + float ---------- */
.scrollbar {
  width: 17px;
  flex: none;
  display: flex;
  flex-direction: column;
  align-items: center;
  background: #f1f1f1;
}
.sb-arrow { width: 0; height: 0; border: 4px solid transparent; }
.sb-up { margin-top: 6px; border-bottom: 5px solid #505050; border-top: 0; }
.sb-thumb { width: 15px; height: 862px; margin-top: 6px; background: #c1c1c1; }
.sb-down { margin-top: 34px; border-top: 5px solid #505050; border-bottom: 0; }
.wa-float {
  position: absolute;
  left: 1826px;
  top: 854px;
  width: 55px;
  height: 55px;
  display: flex;
  justify-content: center;
  align-items: center;
  border-radius: 50%;
  background: #25d366;
  color: #fff;
  z-index: 5;
}
.wa-icon { width: 33px; height: 33px; }

/* ---------- taskbar ---------- */
.taskbar {
  height: 40px;
  flex: none;
  display: flex;
  background: #222b33;
  color: #e8eaed;
  font-family: "Open Sans", "Noto Sans", sans-serif;
  font-size: 12px;
}
.start { width: 48px; flex: none; display: flex; justify-content: center; align-items: center; }
.win { width: 17px; height: 17px; margin-right: 1px; }
.search {
  position: relative;
  width: 288px;
  flex: none;
  display: flex;
  align-items: center;
  padding-left: 12px;
  background: #333;
  border: 1px solid #63686c;
  border-top: 0;
  border-bottom: 0;
  overflow: hidden;
  font-size: 13.500px;
}
.search-ic { width: 16px; height: 16px; margin-right: 11px; }
.search-art { position: absolute; right: 0; bottom: 0; width: 78px; height: 36px; }
.app {
  position: relative;
  width: 49.200px;
  flex: none;
  display: flex;
  justify-content: center;
  align-items: center;
}
.app-on::after {
  content: "";
  position: absolute;
  left: 5px;
  right: 5px;
  bottom: 0;
  height: 2px;
  background: #c9ced2;
}
.app-active { background: #4b5259; }
.app-active::after { left: 0; right: 0; }
.app-ic { width: 24px; height: 24px; display: block; }
.ic-small { width: 18px; height: 18px; }
.ic-mail { width: 32px; height: 28px; margin-left: 8px; }
.badge-num { font: 700 13px "Open Sans", sans-serif; fill: #fff; text-anchor: middle; }
.tray {
  margin-left: auto;
  width: 537px;
  flex: none;
  display: grid;
  grid-template-columns: 32px 38px 116px repeat(6, 24px) 37px 68px 54px 48px;
  align-items: center;
  justify-items: start;
}
.tray-weather { width: 24px; height: 26px; }
.tray-text { font-size: 13px; white-space: nowrap; }
.tray-ic { width: 16px; height: 16px; justify-self: center; }
.tray-lang { font-size: 11px; justify-self: center; }
.weather-num { font: 700 9px "Open Sans", sans-serif; fill: #fff; text-anchor: middle; }
.clock {
  display: flex;
  flex-direction: column;
  align-items: center;
  justify-self: center;
  font-size: 11.300px;
  line-height: 18px;
  white-space: nowrap;
}
.tray-m { width: 28px; height: 24px; justify-self: center; }
.m-num { font: 700 12px "Open Sans", sans-serif; fill: #fff; text-anchor: middle; }
.tray-notif { width: 40px; height: 30px; justify-self: start; margin-top: 4px; }
```
